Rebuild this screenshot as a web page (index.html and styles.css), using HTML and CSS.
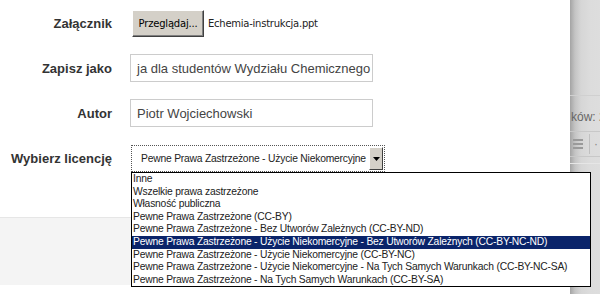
FILE: index.html
```html
<!DOCTYPE html>
<html lang="pl">
<head>
<meta charset="utf-8">
<link rel="stylesheet" href="styles.css">
</head>
<body>
<div class="page">
  <div class="dialog">
    <div class="form">
      <div class="row">
        <div class="label">Załącznik</div>
        <div class="control file">
          <span class="btn">Przeglądaj...</span>
          <span class="fname">Echemia-instrukcja.ppt</span>
        </div>
      </div>
      <div class="row">
        <div class="label">Zapisz jako</div>
        <div class="control"><div class="input">ja dla studentów Wydziału Chemicznego</div></div>
      </div>
      <div class="row">
        <div class="label">Autor</div>
        <div class="control"><div class="input">Piotr Wojciechowski</div></div>
      </div>
      <div class="row">
        <div class="label">Wybierz licencję</div>
        <div class="control">
          <div class="select">
            <span class="sel-text">Pewne Prawa Zastrzeżone - Użycie Niekomercyjne - Bez Utworów Zależnych (CC-BY-NC-ND)</span>
            <span class="sel-btn"><svg width="7" height="4" viewBox="0 0 7 4"><path d="M0 0h7L3.5 4z" fill="#000"/></svg></span>
          </div>
        </div>
      </div>
    </div>
    <div class="footer"></div>
  </div>
  <div class="behind">
    <div class="b-top"></div>
    <div class="b-count">ków: 2</div>
    <div class="b-toolbar">
      <span class="b-icon"><i></i><i></i><i></i></span>
      <span class="b-sep"></span>
      <span class="b-icon2">·</span>
    </div>
    <div class="b-rest"></div>
  </div>
  <ul class="list">
    <li>Inne</li>
    <li>Wszelkie prawa zastrzeżone</li>
    <li>Własność publiczna</li>
    <li>Pewne Prawa Zastrzeżone (CC-BY)</li>
    <li>Pewne Prawa Zastrzeżone - Bez Utworów Zależnych (CC-BY-ND)</li>
    <li class="active">Pewne Prawa Zastrzeżone - Użycie Niekomercyjne - Bez Utworów Zależnych (CC-BY-NC-ND)</li>
    <li>Pewne Prawa Zastrzeżone - Użycie Niekomercyjne (CC-BY-NC)</li>
    <li>Pewne Prawa Zastrzeżone - Użycie Niekomercyjne - Na Tych Samych Warunkach (CC-BY-NC-SA)</li>
    <li>Pewne Prawa Zastrzeżone - Na Tych Samych Warunkach (CC-BY-SA)</li>
  </ul>
</div>
</body>
</html>
```

FILE: styles.css
```css
* { box-sizing: border-box; }
html, body { margin: 0; padding: 0; background: #fff; }
body { font-family: "Liberation Sans", Arial, sans-serif; color: #333; }

.page {
  position: relative;
  display: flex;
  width: 600px;
  height: 294px;
  overflow: hidden;
}

.dialog {
  width: 570px;
  flex: none;
  display: flex;
  flex-direction: column;
  background: #fff;
}

.form {
  padding-top: 9px;
  display: flex;
  flex-direction: column;
  gap: 17px;
}

.row {
  display: grid;
  grid-template-columns: 112px 1fr;
  column-gap: 18px;
  align-items: center;
  height: 28px;
}

.label {
  text-align: right;
  font-weight: bold;
  font-size: 13px;
  color: #333;
  padding-top: 1px;
}

.control { display: flex; align-items: center; }

.file { margin-left: 2px; gap: 4px; }
.btn {
  display: flex;
  align-items: center;
  justify-content: center;
  width: 72px;
  height: 27px;
  background: #d4d0c8;
  border: 1px solid;
  border-color: #fff #404040 #404040 #fff;
  box-shadow: inset -1px -1px 0 #808080;
  font-family: "DejaVu Sans", Tahoma, sans-serif;
  font-size: 10px;
  color: #000;
  letter-spacing: -0.2px;
}
.fname {
  font-family: "DejaVu Sans", Tahoma, sans-serif;
  font-size: 10px;
  color: #222;
  letter-spacing: -0.25px;
}

.input {
  width: 243px;
  height: 28px;
  border: 1px solid #ccc;
  padding: 0 6px;
  display: flex;
  align-items: center;
  font-size: 13px;
  color: #444;
  white-space: nowrap;
  overflow: hidden;
}

.select {
  margin-left: 1px;
  width: 254px;
  height: 27px;
  border: 1px dotted #555;
  display: flex;
  align-items: flex-start;
  padding: 1px 1px 1px 9px;
}
.sel-text {
  flex: 1;
  min-width: 0;
  overflow: hidden;
  white-space: nowrap;
  font-family: "Liberation Sans", Arial, sans-serif;
  font-size: 10.3px;
  letter-spacing: -0.2px;
  color: #222;
  line-height: 23px;
}
.sel-btn {
  width: 14px;
  height: 23px;
  margin-left: 2px;
  background: #d4d0c8;
  border: 1px solid;
  border-color: #fff #404040 #404040 #fff;
  display: flex;
  justify-content: center;
  padding-top: 9px;
}
.sel-btn svg { display: block; }

.footer {
  margin-top: 45px;
  height: 68px;
  background: #f4f4f4;
  border-top: 1px solid #e6e6e6;
}

.behind {
  flex: 1;
  display: flex;
  flex-direction: column;
  background: linear-gradient(to right, #a4a4a4 0, #c4c4c4 5px, #d6d6d6 11px, #dcdcdc 20px, #dedede 100%);
  font-size: 12px;
  color: #555;
}
.b-top { height: 96px; border-bottom: 1px solid #d0d0d0; }
.b-count { height: 36px; padding-left: 1px; padding-top: 14px; white-space: nowrap; color: #666; border-bottom: 1px solid #c8c8c8; }
.b-toolbar {
  height: 25px;
  display: flex;
  align-items: center;
  border-bottom: 1px solid #c8c8c8;
}
.b-icon { display: flex; flex-direction: column; gap: 2px; margin-left: 3px; width: 10px; }
.b-icon i { display: block; height: 2px; background: #9a9a9a; }
.b-sep { width: 1px; height: 20px; background: #c0c0c0; margin-left: 6px; }
.b-icon2 { margin-left: 4px; color: #888; }
.b-rest { flex: 1; border-top: 1px solid #e6e6e6; margin-top: 6px; }

.list {
  position: absolute;
  left: 131px;
  top: 172px;
  width: 460px;
  margin: 0;
  padding: 0;
  list-style: none;
  background: #fff;
  border: 1px solid #000;
  font-family: "Liberation Sans", Arial, sans-serif;
  font-size: 10.3px;
  letter-spacing: -0.2px;
  color: #222;
}
.list li {
  height: 12.6px;
  line-height: 12.6px;
  padding-left: 1px;
  white-space: nowrap;
}
.list li.active { background: #0a246a; color: #fff; }
```
